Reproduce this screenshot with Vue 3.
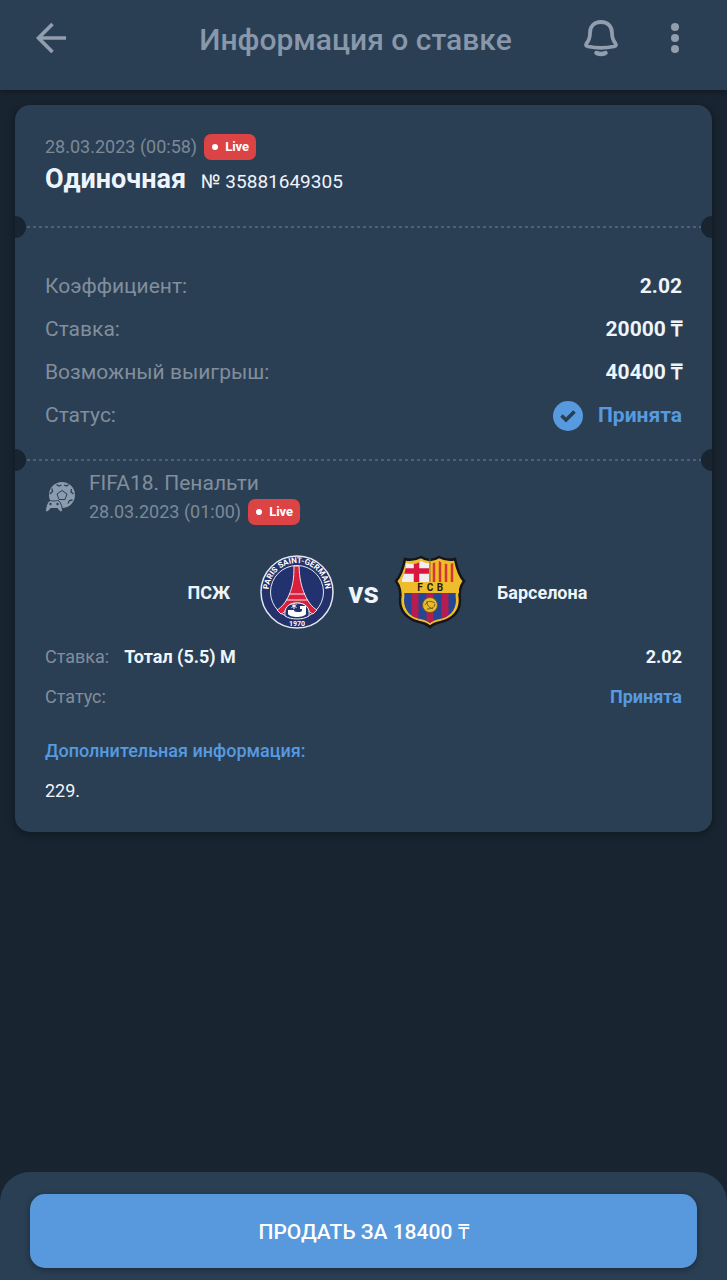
<template>
  <div class="bet-page">
    <header class="bet-header">
      <button type="button" class="icon-button" aria-label="Назад">
        <svg width="44" height="44" viewBox="0 0 44 44" fill="none" stroke="currentColor" stroke-width="3.600">
          <path d="M36 22H10M22.500 8L8.500 22l14 14" />
        </svg>
      </button>
      <h1 class="bet-header__title">Информация о ставке</h1>
      <div class="bet-header__actions">
        <button type="button" class="icon-button" aria-label="Уведомления">
          <svg width="44" height="44" viewBox="0 0 44 44" fill="none" stroke="currentColor" stroke-width="3.800" stroke-linecap="round" stroke-linejoin="round">
            <path d="M22 6C15 6 11 10.500 11 17c0 5-.5 7-3.500 10.500C6.500 29 7 30 9 30.500c8 1.700 18 1.700 26 0 2-.5 2.500-1.500 1.500-3C33.500 24 33 22 33 17c0-6.500-4-11-11-11z" />
            <path d="M17.500 37c3 1.300 6 1.300 9 0" stroke-width="4.500" />
          </svg>
        </button>
        <button type="button" class="icon-button" aria-label="Меню">
          <svg width="44" height="44" viewBox="0 0 44 44" fill="currentColor">
            <circle cx="22" cy="11" r="4" />
            <circle cx="22" cy="22" r="4" />
            <circle cx="22" cy="33" r="4" />
          </svg>
        </button>
      </div>
    </header>

    <main class="ticket">
      <section class="ticket__head">
        <div class="stamp">
          <time>28.03.2023 (00:58)</time>
          <span class="live">Live</span>
        </div>
        <div class="ticket__name">
          <h2>Одиночная</h2>
          <span>№ 35881649305</span>
        </div>
      </section>

      <div class="tear"></div>

      <dl class="summary">
        <div v-for="row in summary" :key="row.label" class="summary__row">
          <dt>{{ row.label }}</dt>
          <dd :class="{ 'is-accepted': row.accepted }">
            <svg v-if="row.accepted" width="30" height="30" viewBox="0 0 30 30" aria-hidden="true">
              <circle cx="15" cy="15" r="15" fill="#579ae0" />
              <path d="M8.500 14.500l4.500 4.500 8.500-8.500" fill="none" stroke="#2a3f54" stroke-width="3.600" />
            </svg>
            {{ row.value }}
          </dd>
        </div>
      </dl>

      <div class="tear"></div>

      <section class="event">
        <div class="event__head">
          <svg width="30" height="32" viewBox="0 0 30 32" aria-hidden="true">
            <circle cx="17" cy="14" r="13" fill="#8b9caf" />
            <g fill="none" stroke="#2a3f54" stroke-width="1">
              <path d="M17 9.500l5 3.500-2 5.500h-6L12 13z" />
              <path d="M11.500 3.500l2.500 1.500 2.500-1M19 4l2.500 1 2-1.500M26.500 8l-.5 3 2.500 2M27.500 19l-3 .5-1.500 3M7 7.500l.5 3-2.500 2.500" stroke-width="1.300" />
            </g>
            <path d="M4 20c2-1 3 0 5 0s3-1 5 0c2 1.500 3.500 7 3.500 10-1.500 2-3.500 0-5-2.500H5.500C4 30 2 32 .5 30 .5 27 2 21.500 4 20z" fill="#8b9caf" stroke="#2a3f54" stroke-width="1" />
            <circle cx="5.500" cy="23" r="1.200" fill="#2a3f54" />
            <circle cx="12.500" cy="23" r="1.200" fill="#2a3f54" />
          </svg>
          <div>
            <div class="event__league">FIFA18. Пенальти</div>
            <div class="stamp">
              <time>28.03.2023 (01:00)</time>
              <span class="live">Live</span>
            </div>
          </div>
        </div>

        <div class="teams">
          <span class="teams__home">ПСЖ</span>
          <svg width="74" height="74" viewBox="0 0 74 74" aria-hidden="true">
            <defs>
              <path id="psg-arc" d="M9.500 44A28.500 28.500 0 1 1 64.500 44" />
            </defs>
            <circle cx="37" cy="37" r="36" fill="#24316b" stroke="#e4e9f2" stroke-width="1.500" />
            <circle cx="37" cy="37" r="26.500" fill="#21326f" stroke="#e4e9f2" stroke-width="1" />
            <path d="M34 11h5c.5 12 2 20 6 29 3 7 7 12 12 15l-4 4c-3-1-4-3-5-5-2-4-5-6-11-6s-9 2-11 6c-1 2-2 4-5 5l-4-4c5-3 9-8 12-15 4-9 5-17 5-29z" fill="#da1f3d" stroke="#f1dfe6" stroke-width="1" />
            <path d="M29 39h16M26 45h22" stroke="#eee" stroke-width="1" />
            <path d="M25 61c-1-8 3-13 12-13s13 5 12 13c-6 4-18 4-24 0z" fill="#21326f" stroke="#eee" stroke-width="1" />
            <path d="M28 55h6c0 2 2 2 5 2 3 0 3-1 3-3h-2v-3h6v8c-2 4-16 4-18 0z" fill="#fff" />
            <path d="M34 48v6M31.500 49.500l5 3M36.500 49.500l-5 3" stroke="#fff" stroke-width="1" />
            <text class="crest-text" fill="#fff" font-size="8">
              <textPath href="#psg-arc" startOffset="50%" text-anchor="middle">PARIS SAINT-GERMAIN</textPath>
            </text>
            <text class="crest-text" x="37" y="71" fill="#fff" font-size="7" text-anchor="middle">1970</text>
          </svg>
          <span class="teams__vs">vs</span>
          <svg width="74" height="74" viewBox="0 0 74 74" aria-hidden="true">
            <defs>
              <clipPath id="fcb-inner">
                <path d="M13 8c7 2 11 1 15-2 6 3 12 3 18 0 4 3 8 4 15 2 0 7 2 12 5 18-3 8-4 12-3 19 0 11-7 17-16 19-5 1-8 2-10 4-2-2-5-3-10-4-9-2-16-8-16-19 1-7 0-11-3-19 3-6 5-11 5-18z" />
              </clipPath>
            </defs>
            <path d="M12 4c6 2 10 1 16-2 6 4 12 4 18 0 6 3 10 4 16 2 2 10 4 17 9 22-5 7-5 13-4 19 0 13-8 19-19 22-5 1-8 2-11 5-3-3-6-4-11-5-11-3-19-9-19-22 1-6 1-12-4-19 5-5 7-12 9-22z" fill="#efbd2b" stroke="#15151a" stroke-width="2.500" />
            <g clip-path="url(#fcb-inner)">
              <path d="M9 5h27v22H9z" fill="#f1edf0" />
              <path d="M23.500 5v22M8 16h28" stroke="#d8193d" stroke-width="5.500" />
              <path d="M41 5v22M47 5v22M53 5v22M59 5v22" stroke="#d23731" stroke-width="2.500" />
              <path d="M5 37h64v34H5z" fill="#244695" />
              <path d="M22 37v34M37 37v34M52 37v34" stroke="#b51c50" stroke-width="7" />
            </g>
            <path d="M37 4v23" stroke="#8b701d" stroke-width="1" />
            <path d="M8 27h58v11H9z" fill="#efbd2b" />
            <circle cx="37" cy="50" r="7.500" fill="#e9bb30" stroke="#755716" stroke-width="1" />
            <path d="M32 50c3-5 6-4 10-2M34 54c6 0 7-2 8-5M34 46c0 4 1 6 6 8" fill="none" stroke="#755716" stroke-width="1" />
            <text class="crest-text" y="36" font-size="10" fill="#201b16" text-anchor="middle">
              <tspan x="27">F</tspan><tspan x="37">C</tspan><tspan x="47">B</tspan>
            </text>
          </svg>
          <span class="teams__away">Барселона</span>
        </div>

        <div class="event__row">
          <span>Ставка:</span>
          <strong>Тотал (5.5) М</strong>
          <strong class="event__value">2.02</strong>
        </div>
        <div class="event__row">
          <span>Статус:</span>
          <strong class="event__value is-accepted">Принята</strong>
        </div>

        <h3 class="event__more">Дополнительная информация:</h3>
        <p class="event__note">229.</p>
      </section>
    </main>

    <footer class="sell-bar">
      <button type="button" class="sell-bar__button">ПРОДАТЬ ЗА 18400 ₸</button>
    </footer>
  </div>
</template>

<script setup>
const summary = [
  { label: 'Коэффициент:', value: '2.02' },
  { label: 'Ставка:', value: '20000 ₸' },
  { label: 'Возможный выигрыш:', value: '40400 ₸' },
  { label: 'Статус:', value: 'Принята', accepted: true },
]
</script>

<style>
body {
  margin: 0;
  background: #182430;
}
</style>

<style scoped>
.bet-page {
  display: flex;
  flex-direction: column;
  min-height: 100vh;
  color: #eef4fb;
  font-family: Roboto, "Liberation Sans", sans-serif;
  background: #182430;
}

h1, h2, h3, p, dl, dd { margin: 0; }

button {
  padding: 0;
  border: 0;
  font-family: inherit;
  cursor: pointer;
}

svg { display: block; flex: none; }

.bet-header {
  display: grid;
  grid-template-columns: 1fr auto 1fr;
  align-items: center;
  box-sizing: border-box;
  height: 90px;
  padding: 0 30px 14px;
  background: #2a3f54;
  box-shadow: 0 2px 6px rgba(0, 0, 0, 0.3);
  color: #8997aa;
}

.bet-header__title {
  padding: 4px 16px 0 0;
  font-size: 30px;
  font-weight: 500;
  line-height: 36px;
}

.bet-header__actions {
  display: flex;
  justify-content: flex-end;
  gap: 30px;
}

.icon-button {
  justify-self: start;
  background: transparent;
  color: #929dad;
}

.ticket {
  margin: 15px 15px 30px;
  border-radius: 15px;
  background: #2a3f54;
  box-shadow: 0 2px 8px rgba(0, 0, 0, 0.35);
}

.ticket__head { padding: 28px 30px 26px; }

.stamp {
  display: flex;
  align-items: center;
  gap: 7px;
  color: #7c8998;
  font-size: 18px;
  line-height: 28px;
}

.live {
  display: inline-flex;
  align-items: center;
  gap: 7px;
  height: 26px;
  padding: 0 7px 0 8px;
  border-radius: 7px;
  background: #db4345;
  color: #fff;
  font-size: 13px;
  font-weight: 700;
}

.live::before {
  width: 6px;
  height: 6px;
  border-radius: 50%;
  background: #fff;
  content: "";
}

.ticket__name {
  display: flex;
  align-items: baseline;
  gap: 15px;
  font-size: 19px;
  line-height: 36px;
}

.ticket__name h2 {
  font-size: 27px;
  font-weight: 700;
}

.tear {
  display: flex;
  align-items: center;
  justify-content: space-between;
  height: 2px;
  background: repeating-linear-gradient(90deg, #4d6075 0 3px, transparent 3px 6px);
}

.tear::before,
.tear::after {
  width: 11px;
  height: 22px;
  border-radius: 0 11px 11px 0;
  background: #182430;
  content: "";
}

.tear::after { border-radius: 11px 0 0 11px; }

.summary {
  padding: 37px 30px 22px;
  font-size: 21px;
  line-height: 43px;
}

.summary__row {
  display: flex;
  justify-content: space-between;
}

.summary__row dt { color: #828e9c; }

.summary__row dd {
  display: flex;
  align-items: center;
  gap: 15px;
  font-weight: 700;
}

.summary__row .is-accepted { color: #579ae0; }

.event { padding: 7px 30px 21px; }

.event__head {
  display: flex;
  align-items: center;
  gap: 14px;
}

.event__league {
  color: #828e9c;
  font-size: 21px;
  line-height: 30px;
}

.teams {
  display: grid;
  grid-template-columns: 1fr 74px 31px 74px 1fr;
  align-items: center;
  column-gap: 14px;
  padding: 29px 0 8px;
  font-size: 18px;
  font-weight: 700;
}

.teams__home {
  padding-right: 16px;
  text-align: right;
}

.teams__away { padding-left: 16px; }

.teams__vs {
  font-size: 30px;
  text-align: center;
}

.crest-text { font-weight: 700; }

.event__row {
  display: flex;
  gap: 15px;
  color: #828e9c;
  font-size: 18px;
  line-height: 40px;
}

.event__row strong { color: #eef4fb; }

.event__row .event__value { margin-left: auto; }

.event__row .is-accepted { color: #579ae0; }

.event__more {
  margin-top: 14px;
  color: #579ae0;
  font-size: 18px;
  font-weight: 500;
  line-height: 40px;
}

.event__note {
  font-size: 18px;
  line-height: 40px;
}

.sell-bar {
  position: sticky;
  bottom: 0;
  margin-top: auto;
  padding: 22px 30px 12px;
  border-radius: 30px 30px 0 0;
  background: #2a3f54;
}

.sell-bar__button {
  width: 100%;
  height: 74px;
  border-radius: 15px;
  background: #5799dc;
  box-shadow: 0 2px 6px rgba(0, 0, 0, 0.35);
  color: #fff;
  font-size: 21px;
  font-weight: 500;
}
</style>
